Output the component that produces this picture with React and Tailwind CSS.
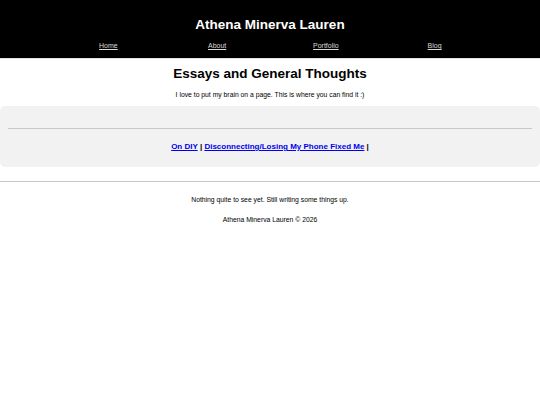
export default function App() {
  const nav = ['Home', 'About', 'Portfolio', 'Blog']
  return (
    <div className="min-h-[405px] bg-white text-black font-['Liberation_Sans',Arial,sans-serif]">
      <header className="bg-black text-white pt-[16px] pb-[7px] border-b border-[#e6e6e6]">
        <h1 className="text-center text-[13.5px] font-bold leading-[17px]">Athena Minerva Lauren</h1>
        <nav className="flex pl-[54px] pr-[51px] mt-[8px]">
          {nav.map((n) => (
            <a key={n} href="#" className="flex-1 text-center text-[7px] leading-[10px] underline text-[#d9d9d9]">
              {n}
            </a>
          ))}
        </nav>
      </header>

      <main>
        <h2 className="text-center text-[13.5px] font-bold leading-[17px] mt-[6px]">Essays and General Thoughts</h2>
        <p className="text-center text-[6.8px] leading-[10px] mt-[8px]">
          I love to put my brain on a page. This is where you can find it :)
        </p>

        <section className="bg-[#f2f2f2] rounded-[5px] mt-[6px] px-[8px] pt-[22px] pb-[14px]">
          <hr className="border-t border-[#c8c8c8]" />
          <p className="text-center text-[8px] font-bold leading-[12px] mt-[12px]">
            <a href="#" className="text-[#0000ee] underline">On DIY</a> |{' '}
            <a href="#" className="text-[#0000ee] underline">Disconnecting/Losing My Phone Fixed Me</a> |
          </p>
        </section>

        <hr className="border-t border-[#c8c8c8] mt-[14px]" />
        <p className="text-center text-[6.8px] leading-[10px] mt-[13px]">Nothing quite to see yet. Still writing some things up.</p>
        <p className="text-center text-[6.8px] leading-[10px] mt-[10px]">Athena Minerva Lauren © 2026</p>
      </main>
    </div>
  )
}
